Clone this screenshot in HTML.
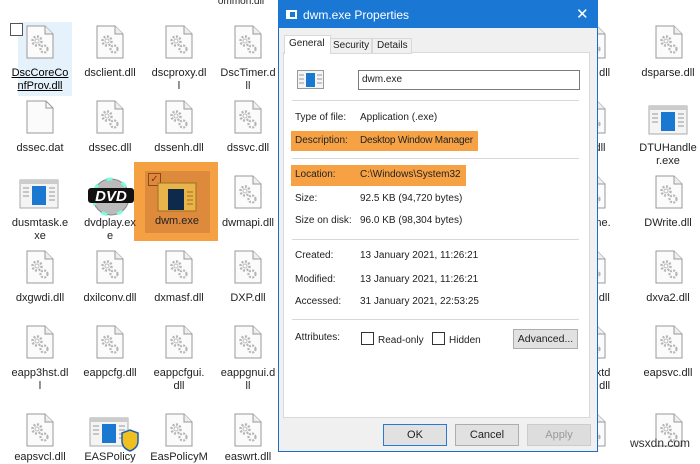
<!DOCTYPE html>
<html><head><style>
body{margin:0;width:700px;height:458px;overflow:hidden;background:#fff;font-family:"Liberation Sans",sans-serif;position:relative}
.a{position:absolute}
.lbl{position:absolute;width:72px;text-align:center;font-size:11px;line-height:13px;color:#222}
.t{position:absolute;font-size:10px;color:#222;white-space:nowrap}
.sep{position:absolute;left:292px;width:287px;height:1px;background:#d8d8d8}
.btn{position:absolute;height:22px;background:#e1e1e1;border:1px solid #adadad;box-sizing:border-box;font-size:11px;text-align:center;line-height:20px;color:#222}
.cb{display:inline-block;width:11px;height:11px;border:1px solid #333;vertical-align:-2px;margin-right:4px;background:#fff}
</style></head><body>
<svg width="0" height="0" style="position:absolute"><defs>
<g id="f"><path d="M1 1H19L27 9V33H1Z" fill="#fbfbfb" stroke="#9a9a9a"/><path d="M19 1V9H27" fill="#eee" stroke="#9a9a9a"/>
<circle cx="11" cy="16" r="4.5" fill="none" stroke="#b5b5b5" stroke-width="2.5" stroke-dasharray="2 1.5"/><circle cx="11" cy="16" r="2" fill="none" stroke="#bbb"/>
<circle cx="18" cy="24" r="3.5" fill="none" stroke="#b5b5b5" stroke-width="2.2" stroke-dasharray="2 1.3"/></g>
<g id="e"><rect x="0" y="0" width="38" height="28" fill="#f4f4f4" stroke="#aaa"/><rect x="0" y="0" width="38" height="4" fill="#ccc"/><rect x="12" y="6" width="14" height="19" fill="#1b78d0"/><path d="M3 8h6M3 12h6M3 16h6M29 8h6M29 12h6M29 16h6M29 20h6" stroke="#999"/></g>
</defs></svg>

<div class="a" style="left:18px;top:22px;width:54px;height:74px;background:#e5f1fb"></div>
<div class="a" style="left:10px;top:23px;width:11px;height:11px;border:1px solid #555;background:#fff"></div>
<div class="a" style="left:134px;top:162px;width:84px;height:79px;background:#f5a043"></div>
<div class="a" style="left:145px;top:171px;width:65px;height:62px;background:#de8a3c"></div>
<div class="a" style="left:148px;top:173px;width:11px;height:11px;border:1px solid #8a4a1a;color:#8a2a1a;font-size:10px;line-height:11px;text-align:center">✓</div>
<div class="lbl" style="left:205px;top:-5px;font-size:10px">ommon.dll</div>

<svg class="a" style="left:0;top:0" width="700" height="458">
<use href="#f" x="26" y="25"/><use href="#f" x="96" y="25"/><use href="#f" x="165" y="25"/><use href="#f" x="234" y="25"/><use href="#f" x="655" y="25"/>
<path d="M27 101H46L53 108V133H27Z" fill="#fbfbfb" stroke="#9a9a9a"/><path d="M46 101V108H53" fill="none" stroke="#9a9a9a"/>
<use href="#f" x="96" y="100"/><use href="#f" x="165" y="100"/><use href="#f" x="234" y="100"/><use href="#e" x="649" y="106"/>
<use href="#e" x="20" y="180"/>
<g transform="translate(111,197)"><circle r="18" fill="#bbb" stroke="#888"/><circle r="18" fill="none" stroke="#7fd" stroke-width="3" stroke-dasharray="6 10"/><circle r="5" fill="#fff" stroke="#888"/><rect x="-23" y="-9" width="46" height="15" rx="3" fill="#111"/><text x="0" y="4" font-family="Liberation Sans" font-weight="bold" font-style="italic" font-size="15" fill="#fff" text-anchor="middle">DVD</text></g>
<rect x="158" y="183" width="38" height="28" fill="#e9b44a" stroke="#a07020"/><rect x="168" y="189" width="16" height="21" fill="#0e2a4a"/><path d="M187 192h6M187 196h6M187 200h6M187 204h6" stroke="#a07020"/>
<use href="#f" x="234" y="175"/><use href="#f" x="655" y="175"/>
<use href="#f" x="26" y="250"/><use href="#f" x="96" y="250"/><use href="#f" x="165" y="250"/><use href="#f" x="234" y="250"/><use href="#f" x="655" y="250"/>
<use href="#f" x="26" y="325"/><use href="#f" x="96" y="325"/><use href="#f" x="165" y="325"/><use href="#f" x="234" y="325"/><use href="#f" x="655" y="325"/>
<use href="#f" x="26" y="413"/><use href="#e" x="90" y="418"/><path d="M122 433l8-3 8 3v8q0 7-8 10q-8-3-8-10z" fill="#f0c020" stroke="#1b5fb0" stroke-width="1.5"/><use href="#f" x="165" y="413"/><use href="#f" x="234" y="413"/><use href="#f" x="655" y="413"/>
<use href="#f" x="578" y="25"/><use href="#f" x="578" y="100"/><use href="#f" x="578" y="175"/><use href="#f" x="578" y="250"/><use href="#f" x="578" y="325"/><use href="#f" x="578" y="413"/>
</svg>

<div class="lbl" style="left:4px;top:67px;color:#000;text-decoration:underline">DscCoreCo<br>nfProv.dll</div>
<div class="lbl" style="left:74px;top:67px">dsclient.dll</div>
<div class="lbl" style="left:143px;top:67px">dscproxy.dl<br>l</div>
<div class="lbl" style="left:212px;top:67px">DscTimer.d<br>ll</div>
<div class="lbl" style="left:632px;top:67px">dsparse.dll</div>
<div class="lbl" style="left:4px;top:142px">dssec.dat</div>
<div class="lbl" style="left:74px;top:142px">dssec.dll</div>
<div class="lbl" style="left:143px;top:142px">dssenh.dll</div>
<div class="lbl" style="left:212px;top:142px">dssvc.dll</div>
<div class="lbl" style="left:632px;top:142px">DTUHandle<br>r.exe</div>
<div class="lbl" style="left:4px;top:217px">dusmtask.e<br>xe</div>
<div class="lbl" style="left:74px;top:217px">dvdplay.ex<br>e</div>
<div class="lbl" style="left:141px;top:215px">dwm.exe</div>
<div class="lbl" style="left:212px;top:217px">dwmapi.dll</div>
<div class="lbl" style="left:632px;top:217px">DWrite.dll</div>
<div class="lbl" style="left:4px;top:292px">dxgwdi.dll</div>
<div class="lbl" style="left:74px;top:292px">dxilconv.dll</div>
<div class="lbl" style="left:143px;top:292px">dxmasf.dll</div>
<div class="lbl" style="left:212px;top:292px">DXP.dll</div>
<div class="lbl" style="left:632px;top:292px">dxva2.dll</div>
<div class="lbl" style="left:4px;top:367px">eapp3hst.dl<br>l</div>
<div class="lbl" style="left:74px;top:367px">eappcfg.dll</div>
<div class="lbl" style="left:143px;top:367px">eappcfgui.<br>dll</div>
<div class="lbl" style="left:212px;top:367px">eappgnui.d<br>ll</div>
<div class="lbl" style="left:632px;top:367px">eapsvc.dll</div>
<div class="lbl" style="left:4px;top:451px">eapsvcl.dll</div>
<div class="lbl" style="left:74px;top:451px">EASPolicy</div>
<div class="lbl" style="left:143px;top:451px">EasPolicyM</div>
<div class="lbl" style="left:212px;top:451px">easwrt.dll</div>
<div class="lbl" style="left:580px;top:67px;width:40px">d.dll</div>
<div class="lbl" style="left:580px;top:142px;width:40px">dll</div>
<div class="lbl" style="left:580px;top:217px;width:40px">ene.</div>
<div class="lbl" style="left:580px;top:292px;width:40px">s.dll</div>
<div class="lbl" style="left:580px;top:367px;width:40px">extd<br>o.dll</div>
<div class="a" style="left:630px;top:436px;font-size:12px;color:#333">wsxdn.com</div>

<div class="a" style="left:278px;top:0;width:320px;height:452px;background:#f0f0f0;border:1px solid #1a6fc2;box-sizing:border-box"></div>
<div class="a" style="left:278px;top:0;width:320px;height:28px;background:#1a78d4"></div>
<div class="a" style="left:286px;top:10px;width:11px;height:9px;background:#fff"><div style="margin:2px 0 0 4px;width:5px;height:5px;background:#1a78d4"></div></div>
<div class="t" style="left:303px;top:8px;color:#fff;font-size:12px">dwm.exe Properties</div>
<div class="t" style="left:576px;top:5px;color:#fff;font-size:15px">✕</div>
<div class="a" style="left:283px;top:52px;width:307px;height:366px;background:#fff;border:1px solid #d9d9d9;box-sizing:border-box"></div>
<div class="a" style="left:284px;top:35px;width:45px;height:18px;background:#fff;border:1px solid #d9d9d9;border-bottom:none"></div>
<div class="t" style="left:289px;top:38px">General</div>
<div class="a" style="left:330px;top:38px;width:40px;height:14px;background:#f0f0f0;border:1px solid #d9d9d9"></div>
<div class="t" style="left:333px;top:40px">Security</div>
<div class="a" style="left:372px;top:38px;width:38px;height:14px;background:#f0f0f0;border:1px solid #d9d9d9"></div>
<div class="t" style="left:377px;top:40px">Details</div>
<svg class="a" style="left:297px;top:70px" width="28" height="20"><rect x=".5" y=".5" width="26" height="18" fill="#f4f4f4" stroke="#999"/><rect x="9" y="3" width="9" height="14" fill="#1b78d0"/><path d="M2 5h5M2 9h5M2 13h5M20 5h5M20 9h5M20 13h5" stroke="#999"/></svg>
<div class="a" style="left:358px;top:70px;width:222px;height:20px;border:1px solid #7a7a7a;box-sizing:border-box"></div>
<div class="t" style="left:362px;top:74px">dwm.exe</div>
<div class="sep" style="top:100px"></div>
<div class="t" style="left:295px;top:112px">Type of file:</div><div class="t" style="left:360px;top:112px">Application (.exe)</div>
<div class="a" style="left:291px;top:131px;width:187px;height:20px;background:#f6a244"></div>
<div class="t" style="left:295px;top:135px">Description:</div><div class="t" style="left:360px;top:135px;letter-spacing:-0.2px">Desktop Window Manager</div>
<div class="sep" style="top:158px"></div>
<div class="a" style="left:291px;top:165px;width:175px;height:21px;background:#f6a244"></div>
<div class="t" style="left:295px;top:169px">Location:</div><div class="t" style="left:360px;top:169px">C:\Windows\System32</div>
<div class="t" style="left:295px;top:193px">Size:</div><div class="t" style="left:360px;top:193px">92.5 KB (94,720 bytes)</div>
<div class="t" style="left:295px;top:215px">Size on disk:</div><div class="t" style="left:360px;top:215px">96.0 KB (98,304 bytes)</div>
<div class="sep" style="top:239px"></div>
<div class="t" style="left:295px;top:250px">Created:</div><div class="t" style="left:360px;top:250px">13 January 2021, 11:26:21</div>
<div class="t" style="left:295px;top:274px">Modified:</div><div class="t" style="left:360px;top:274px">13 January 2021, 11:26:21</div>
<div class="t" style="left:295px;top:296px">Accessed:</div><div class="t" style="left:360px;top:296px">31 January 2021, 22:53:25</div>
<div class="sep" style="top:319px"></div>
<div class="t" style="left:295px;top:332px">Attributes:</div>
<div class="t" style="left:361px;top:332px"><span class="cb"></span>Read-only</div>
<div class="t" style="left:432px;top:332px"><span class="cb"></span>Hidden</div>
<div class="btn" style="left:513px;top:329px;width:65px;height:20px;line-height:18px;font-size:10.5px">Advanced...</div>
<div class="btn" style="left:383px;top:424px;width:64px;border:1px solid #2a7ad4">OK</div>
<div class="btn" style="left:455px;top:424px;width:64px">Cancel</div>
<div class="btn" style="left:527px;top:424px;width:64px;color:#999;border-color:#ccc;background:#ddd">Apply</div>
</body></html>
